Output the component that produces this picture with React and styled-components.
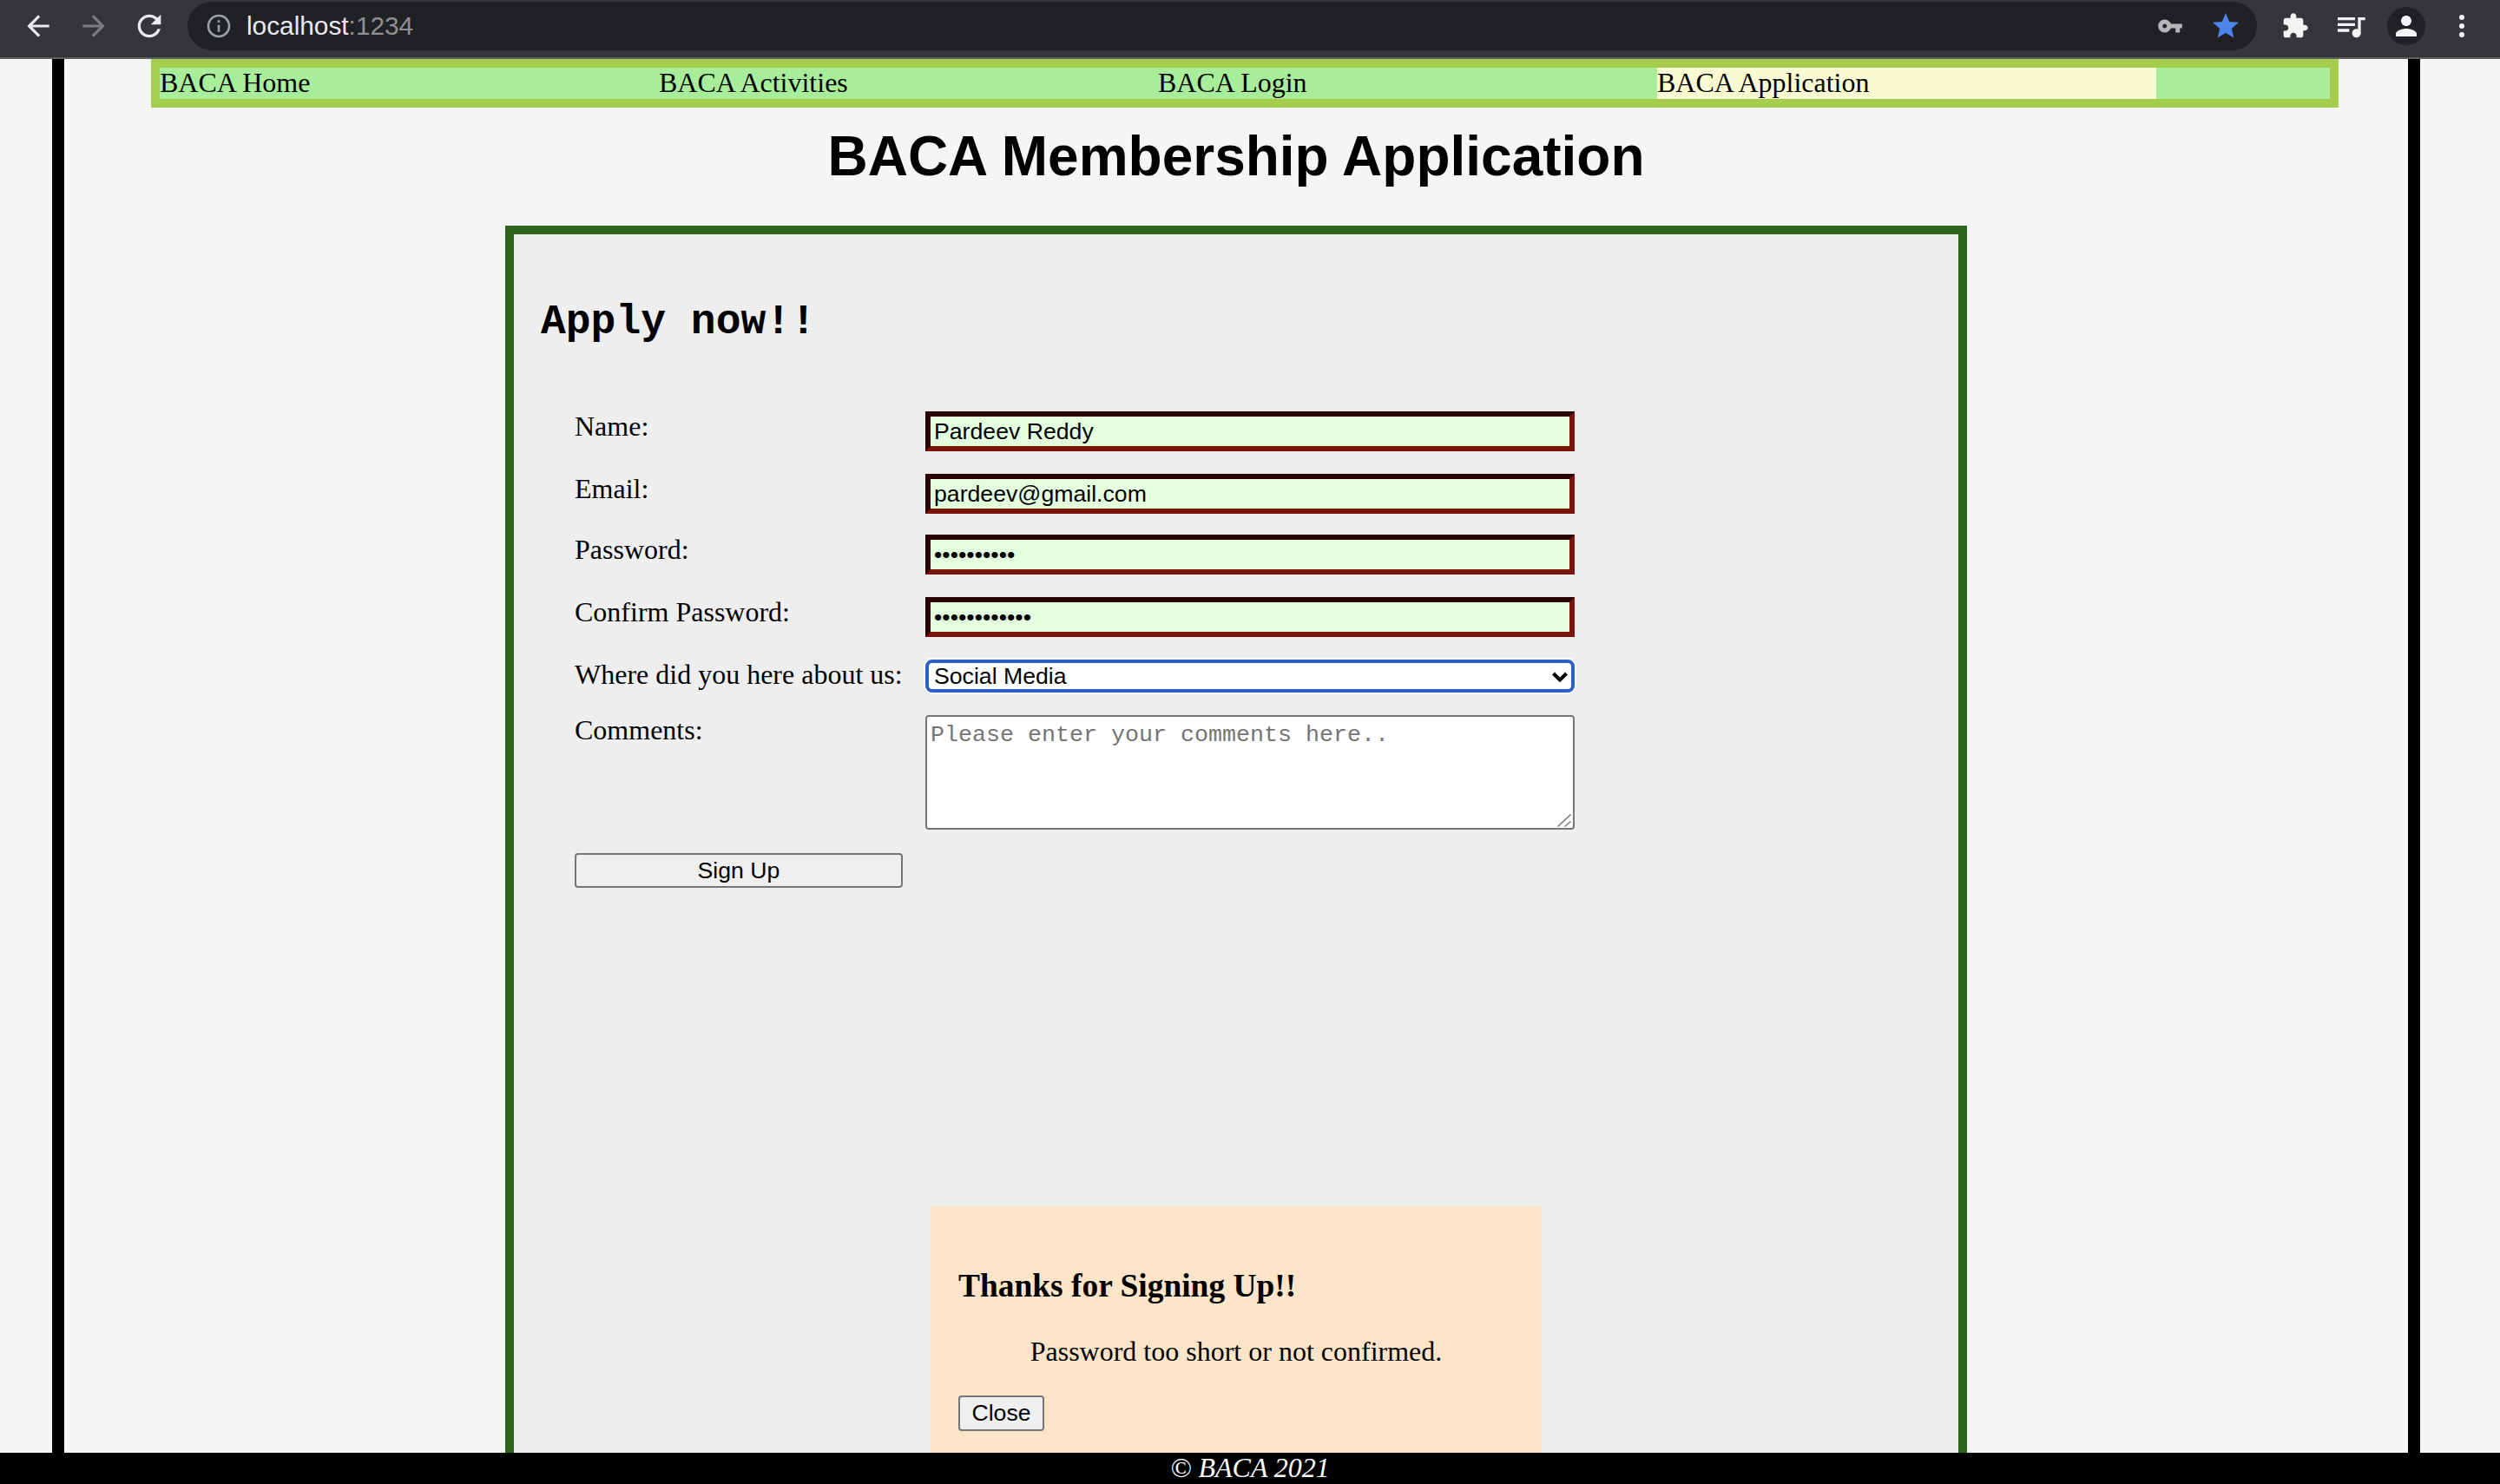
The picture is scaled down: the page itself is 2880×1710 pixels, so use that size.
import styled, { createGlobalStyle } from "styled-components";

const GlobalStyle = createGlobalStyle`
    html, body {
        margin: 0;
        padding: 0;
        height: 100%;
        overflow: hidden;
        background-color: #f5f5f5;
    }
`;

const App = () => {
    return (
        <Page>
            <GlobalStyle />
            <BrowserBar>
                <ToolButton>
                    <Icon $size={38} $color="#e8eaed" viewBox="0 0 24 24">
                        <path d="M20 11H7.83l5.59-5.59L12 4l-8 8 8 8 1.41-1.41L7.83 13H20v-2z" />
                    </Icon>
                </ToolButton>
                <ToolButton>
                    <Icon $size={38} $color="#7c7d80" viewBox="0 0 24 24">
                        <path d="M12 4l-1.41 1.41L16.17 11H4v2h12.17l-5.58 5.59L12 20l8-8z" />
                    </Icon>
                </ToolButton>
                <ToolButton>
                    <Icon $size={40} $color="#e8eaed" viewBox="0 0 24 24">
                        <path d="M17.65 6.35C16.2 4.9 14.21 4 12 4c-4.42 0-7.99 3.58-7.99 8s3.57 8 7.99 8c3.73 0 6.84-2.55 7.73-6h-2.08c-.82 2.33-3.04 4-5.65 4-3.31 0-6-2.69-6-6s2.69-6 6-6c1.66 0 3.14.69 4.22 1.78L13 11h7V4l-2.35 2.35z" />
                    </Icon>
                </ToolButton>
                <Omnibox>
                    <Icon $size={32} $color="#9aa0a6" viewBox="0 0 24 24">
                        <path d="M11 7h2v2h-2zm0 4h2v6h-2zm1-9C6.48 2 2 6.48 2 12s4.48 10 10 10 10-4.48 10-10S17.52 2 12 2zm0 18c-4.41 0-8-3.59-8-8s3.59-8 8-8 8 3.59 8 8-3.59 8-8 8z" />
                    </Icon>
                    <UrlText>localhost<UrlPort>:1234</UrlPort></UrlText>
                    <OmniboxEnd>
                        <Icon $size={30} $color="#b5b6b8" viewBox="0 0 24 24">
                            <path d="M12.65 10C11.83 7.67 9.61 6 7 6c-3.31 0-6 2.69-6 6s2.69 6 6 6c2.61 0 4.83-1.67 5.65-4H17v4h4v-4h2v-4H12.65zM7 14c-1.1 0-2-.9-2-2s.9-2 2-2 2 .9 2 2-.9 2-2 2z" />
                        </Icon>
                        <Icon $size={36} $color="#4d84ec" viewBox="0 0 24 24">
                            <path d="M12 17.27L18.18 21l-1.64-7.03L22 9.24l-7.19-.61L12 2 9.19 8.63 2 9.24l5.46 4.73L5.82 21z" />
                        </Icon>
                    </OmniboxEnd>
                </Omnibox>
                <BarEnd>
                    <ToolButton>
                        <Icon $size={32} $color="#f1f3f4" viewBox="0 0 24 24">
                            <path d="M20.5 11H19V7c0-1.1-.9-2-2-2h-4V3.5C13 2.12 11.88 1 10.5 1S8 2.12 8 3.5V5H4c-1.1 0-1.99.9-1.99 2v3.8H3.5c1.49 0 2.7 1.21 2.7 2.7s-1.21 2.7-2.7 2.7H2V20c0 1.1.9 2 2 2h3.8v-1.5c0-1.49 1.21-2.7 2.7-2.7 1.49 0 2.7 1.21 2.7 2.7V22H17c1.1 0 2-.9 2-2v-4h1.5c1.38 0 2.5-1.12 2.5-2.5S21.88 11 20.5 11z" />
                        </Icon>
                    </ToolButton>
                    <ToolButton>
                        <Icon $size={40} $color="#f1f3f4" viewBox="0 0 24 24">
                            <path d="M15 6H3v2h12V6zm0 4H3v2h12v-2zM3 16h8v-2H3v2zM17 6v8.18c-.31-.11-.65-.18-1-.18-1.66 0-3 1.34-3 3s1.34 3 3 3 3-1.34 3-3V8h3V6h-5z" />
                        </Icon>
                    </ToolButton>
                    <ToolButton>
                        <Avatar>
                            <Icon $size={36} $color="#f1f3f4" viewBox="0 0 24 24">
                                <path d="M12 12c2.21 0 4-1.79 4-4s-1.79-4-4-4-4 1.79-4 4 1.79 4 4 4zm0 2c-2.67 0-8 1.34-8 4v2h16v-2c0-2.66-5.33-4-8-4z" />
                            </Icon>
                        </Avatar>
                    </ToolButton>
                    <ToolButton>
                        <Icon $size={32} $color="#f1f3f4" viewBox="0 0 32 32">
                            <circle cx="16" cy="6" r="3" />
                            <circle cx="16" cy="16" r="3" />
                            <circle cx="16" cy="26" r="3" />
                        </Icon>
                    </ToolButton>
                </BarEnd>
            </BrowserBar>

            <Viewport>
                <Content>
                    <NavBar>
                        <NavLink>BACA Home</NavLink>
                        <NavLink>BACA Activities</NavLink>
                        <NavLink>BACA Login</NavLink>
                        <NavLink $active>BACA Application</NavLink>
                    </NavBar>
                    <PageTitle>BACA Membership Application</PageTitle>
                    <FormPanel>
                        <ApplyTitle>Apply now!!</ApplyTitle>
                        <FormGrid>
                            <FieldLabel>Name:</FieldLabel>
                            <TextField type="text" defaultValue="Pardeev Reddy" />
                            <FieldLabel>Email:</FieldLabel>
                            <TextField type="email" defaultValue="pardeev@gmail.com" />
                            <FieldLabel>Password:</FieldLabel>
                            <TextField type="password" defaultValue="1234567890" />
                            <FieldLabel>Confirm Password:</FieldLabel>
                            <TextField type="password" defaultValue="123456789012" />
                            <FieldLabel>Where did you here about us:</FieldLabel>
                            <SelectWrap>
                                <SelectField defaultValue="social">
                                    <option value="social">Social Media</option>
                                    <option value="friend">Friend</option>
                                </SelectField>
                                <SelectArrow viewBox="0 0 18 12">
                                    <polyline points="1.5,2 9,9.5 16.5,2" />
                                </SelectArrow>
                            </SelectWrap>
                            <FieldLabel>Comments:</FieldLabel>
                            <TextAreaWrap>
                                <CommentsField placeholder="Please enter your comments here.." />
                                <ResizeGrip viewBox="0 0 16 15">
                                    <line x1="0.5" y1="14.5" x2="15.5" y2="0.5" />
                                    <line x1="8.5" y1="14.5" x2="15.5" y2="8.5" />
                                </ResizeGrip>
                            </TextAreaWrap>
                            <SignUpButton type="button">Sign Up</SignUpButton>
                        </FormGrid>
                        <Notice>
                            <NoticeTitle>Thanks for Signing Up!!</NoticeTitle>
                            <NoticeText>Password too short or not confirmed.</NoticeText>
                            <CloseButton type="button">Close</CloseButton>
                        </Notice>
                    </FormPanel>
                </Content>
            </Viewport>

            <Footer>© BACA 2021</Footer>
        </Page>
    );
};

const Page = styled.div`
    display: flex;
    flex-direction: column;
    height: 100vh;
    font-family: "Liberation Serif", serif;
    font-size: 32px;
    color: #000000;
`;

const BrowserBar = styled.div`
    display: flex;
    align-items: center;
    flex: none;
    box-sizing: border-box;
    height: 68px;
    padding: 0 0 6px 12px;
    background-color: #35363a;
    border-bottom: 2px solid #5e5f62;
`;

const ToolButton = styled.div`
    display: flex;
    align-items: center;
    justify-content: center;
    flex: none;
    width: 64px;
    height: 60px;
`;

const Icon = styled.svg`
    display: block;
    flex: none;
    width: ${(props) => props.$size}px;
    height: ${(props) => props.$size}px;
    fill: ${(props) => props.$color};
`;

const Omnibox = styled.div`
    display: flex;
    align-items: center;
    box-sizing: border-box;
    width: 2384px;
    height: 56px;
    margin-left: 12px;
    padding: 0 18px 0 20px;
    border-radius: 28px;
    background-color: #202124;
`;

const UrlText = styled.span`
    margin-left: 16px;
    font-family: "Liberation Sans", sans-serif;
    font-size: 29.8px;
    color: #e8eaed;
`;

const UrlPort = styled.span`
    color: #8e9094;
`;

const OmniboxEnd = styled.div`
    display: flex;
    align-items: center;
    gap: 31px;
    margin-left: auto;
`;

const BarEnd = styled.div`
    display: flex;
    align-items: center;
    margin-left: 12px;
`;

const Avatar = styled.div`
    display: flex;
    align-items: center;
    justify-content: center;
    width: 44px;
    height: 44px;
    border-radius: 50%;
    background-color: #202124;
`;

const Viewport = styled.div`
    flex: 1;
    min-height: 0;
    overflow: hidden;
`;

const Content = styled.div`
    box-sizing: border-box;
    width: 2728px;
    margin-left: 60px;
    min-height: 100%;
    border-left: 14px solid #000000;
    border-right: 14px solid #000000;
`;

const NavBar = styled.nav`
    display: flex;
    box-sizing: border-box;
    width: 2520px;
    margin-left: 100px;
    border: 10px solid #a6cd4e;
    background-color: #a8ee9a;
`;

const NavLink = styled.a`
    flex: none;
    width: 575px;
    height: 36px;
    line-height: 35px;
    background-color: ${(props) => (props.$active ? "#fafad2" : "transparent")};
`;

const PageTitle = styled.h1`
    margin: 19px 0 43px;
    font-family: "Liberation Sans", sans-serif;
    font-size: 64px;
    line-height: 74px;
    font-weight: bold;
    text-align: center;
`;

const FormPanel = styled.div`
    box-sizing: border-box;
    width: 1684px;
    margin: 0 auto;
    padding: 74px 31px 0;
    border: 10px solid #2c641b;
    background-color: #eeeeee;
`;

const ApplyTitle = styled.h2`
    margin: 0 0 76px;
    font-family: "Liberation Mono", monospace;
    font-size: 48px;
    line-height: 54px;
    font-weight: bold;
`;

const FormGrid = styled.form`
    display: grid;
    grid-template-columns: 378px 748px;
    grid-template-rows: 72px 70px 72px 72px 64px 159px auto;
    column-gap: 26px;
    align-items: start;
    margin-left: 39px;
`;

const FieldLabel = styled.label`
    margin-top: -1px;
    line-height: 36px;
    white-space: nowrap;
`;

const TextField = styled.input`
    box-sizing: border-box;
    width: 748px;
    height: 46px;
    margin: 0;
    padding: 2px 4px;
    border-width: 6px;
    border-style: solid;
    border-color: #2b0000 #7a150c #7a150c #2b0000;
    border-radius: 0;
    outline: none;
    background-color: #e4ffde;
    color: #000000;
    font-family: "Liberation Sans", sans-serif;
    font-size: 26.67px;
`;

const SelectWrap = styled.div`
    position: relative;
    width: 748px;
    height: 38px;
    border-radius: 8px;
    box-shadow: 0 0 0 2px #ffffff;
`;

const SelectField = styled.select`
    display: block;
    box-sizing: border-box;
    width: 100%;
    height: 100%;
    margin: 0;
    padding: 0 0 0 6px;
    appearance: none;
    border: 4px solid #2a5fc5;
    border-radius: 8px;
    outline: none;
    background-color: #ffffff;
    color: #000000;
    font-family: "Liberation Sans", sans-serif;
    font-size: 26.67px;
`;

const SelectArrow = styled.svg`
    position: absolute;
    top: 14px;
    right: 8px;
    width: 18px;
    height: 12px;
    fill: none;
    stroke: #000000;
    stroke-width: 4;
    pointer-events: none;
`;

const TextAreaWrap = styled.div`
    position: relative;
    width: 748px;
    height: 132px;
`;

const CommentsField = styled.textarea`
    display: block;
    box-sizing: border-box;
    width: 100%;
    height: 100%;
    margin: 0;
    padding: 6px 4px 4px;
    border: 2px solid #767676;
    border-radius: 4px;
    outline: none;
    resize: none;
    background-color: #ffffff;
    font-family: "Liberation Mono", monospace;
    font-size: 26.67px;

    &::placeholder {
        color: #757575;
        opacity: 1;
    }
`;

const ResizeGrip = styled.svg`
    position: absolute;
    right: 4px;
    bottom: 3px;
    width: 16px;
    height: 15px;
    stroke: #767676;
    stroke-width: 1.5;
    pointer-events: none;
`;

const SignUpButton = styled.button`
    box-sizing: border-box;
    width: 378px;
    height: 40px;
    margin: 0;
    padding: 0;
    border: 2px solid #767676;
    border-radius: 4px;
    background-color: #efefef;
    color: #000000;
    font-family: "Liberation Sans", sans-serif;
    font-size: 26.67px;
`;

const Notice = styled.div`
    box-sizing: border-box;
    width: 704px;
    margin: 367px auto 0;
    padding: 70px 32px 60px;
    background-color: #fce4c8;
`;

const NoticeTitle = styled.h3`
    margin: 0 0 35px;
    font-size: 37.44px;
    line-height: 44px;
    font-weight: bold;
`;

const NoticeText = styled.p`
    margin: 0 0 33px;
    line-height: 36px;
    text-align: center;
`;

const CloseButton = styled.button`
    display: block;
    box-sizing: border-box;
    width: 99px;
    height: 41px;
    margin: 0;
    padding: 0;
    border: 2px solid #767676;
    border-radius: 4px;
    background-color: #efefef;
    color: #000000;
    font-family: "Liberation Sans", sans-serif;
    font-size: 26.67px;
`;

const Footer = styled.footer`
    flex: none;
    height: 36px;
    background-color: #000000;
    color: #ffffff;
    font-style: italic;
    line-height: 35px;
    text-align: center;
`;

export default App;
